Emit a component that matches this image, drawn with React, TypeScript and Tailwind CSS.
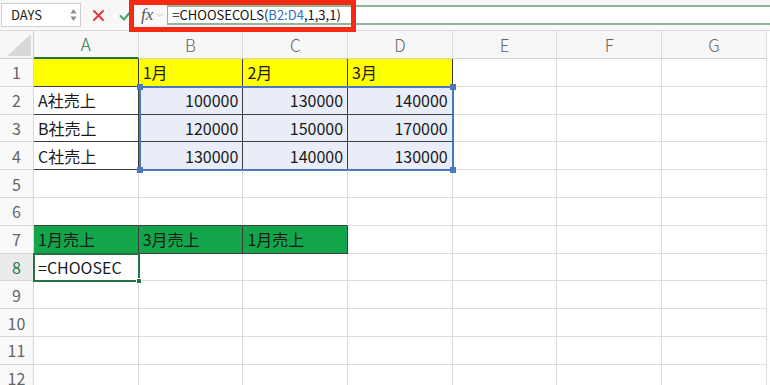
import React from "react";

const cols = ["A", "B", "C", "D", "E", "F", "G"];

type Cell = { text?: string; align?: "left" | "right"; bg?: string; dark?: boolean };

const data: Record<number, Record<string, Cell>> = {
  1: {
    A: { bg: "bg-[#ffff00]", dark: true },
    B: { text: "1月", bg: "bg-[#ffff00]", dark: true },
    C: { text: "2月", bg: "bg-[#ffff00]", dark: true },
    D: { text: "3月", bg: "bg-[#ffff00]", dark: true },
  },
  2: {
    A: { text: "A社売上", dark: true },
    B: { text: "100000", align: "right", bg: "bg-[#e8edf8]", dark: true },
    C: { text: "130000", align: "right", bg: "bg-[#e8edf8]", dark: true },
    D: { text: "140000", align: "right", bg: "bg-[#e8edf8]", dark: true },
  },
  3: {
    A: { text: "B社売上", dark: true },
    B: { text: "120000", align: "right", bg: "bg-[#e8edf8]", dark: true },
    C: { text: "150000", align: "right", bg: "bg-[#e8edf8]", dark: true },
    D: { text: "170000", align: "right", bg: "bg-[#e8edf8]", dark: true },
  },
  4: {
    A: { text: "C社売上", dark: true },
    B: { text: "130000", align: "right", bg: "bg-[#e8edf8]", dark: true },
    C: { text: "140000", align: "right", bg: "bg-[#e8edf8]", dark: true },
    D: { text: "130000", align: "right", bg: "bg-[#e8edf8]", dark: true },
  },
  7: {
    A: { text: "1月売上", bg: "bg-[#12a54c]", dark: true },
    B: { text: "3月売上", bg: "bg-[#12a54c]", dark: true },
    C: { text: "1月売上", bg: "bg-[#12a54c]", dark: true },
  },
  8: {
    A: { text: "=CHOOSEC" },
  },
};

function isDark(r: number, c: string) {
  return !!data[r]?.[c]?.dark;
}

function FormulaBar() {
  return (
    <div className="flex h-[30px] items-center bg-[#f8f8f8]">
      <div className="ml-[1px] flex h-[24px] w-[80px] items-center justify-between border border-[#cfcfcf] bg-white pl-[9px] pr-[3px]">
        <span className="text-[13px] text-[#222]">DAYS</span>
        <svg width="7" height="14" viewBox="0 0 7 14">
          <path d="M3.5 1 L6.5 5.5 L0.5 5.5 Z" fill="#8a8a8a" />
          <path d="M3.5 13 L6.5 8.5 L0.5 8.5 Z" fill="#8a8a8a" />
        </svg>
      </div>
      <svg className="ml-[11px]" width="13" height="13" viewBox="0 0 13 13">
        <path d="M2 2 L11 11 M11 2 L2 11" stroke="#e0393b" strokeWidth="2" strokeLinecap="round" />
      </svg>
      <svg className="ml-[14px]" width="13" height="13" viewBox="0 0 13 13">
        <path d="M1.5 7 L5 10.5 L11.5 2.5" stroke="#44a85f" strokeWidth="2" fill="none" strokeLinecap="round" />
      </svg>
      <span className="ml-[9px] font-['Liberation_Serif',serif] text-[17px] italic text-[#555]">fx</span>
      <svg className="ml-[3px]" width="8" height="6" viewBox="0 0 8 6">
        <path d="M1 1.5 L4 4.5 L7 1.5" stroke="#c4c4c4" strokeWidth="1" fill="none" />
      </svg>
      <div className="ml-[3px] flex h-[20px] flex-1 items-center border-y-2 border-l border-[#8db79a] bg-white pl-[4px] text-[13px] text-[#111]">
        =CHOOSECOLS(<span className="text-[#2f6fc9]">B2:D4</span>,1,3,1)
      </div>
    </div>
  );
}

export default function App() {
  const rows = Array.from({ length: 12 }, (_, i) => i + 1);
  return (
    <div className="relative h-[385px] w-[770px] overflow-hidden bg-white font-['Noto_Sans_CJK_JP','Noto_Sans',sans-serif]">
      <FormulaBar />
      <div className="relative grid grid-cols-[34px_repeat(7,104.7px)] grid-rows-[28px_repeat(12,27.8px)] border-t border-[#d9d9d9]">
        <div className="relative border-r border-b border-[#d0d0d0] bg-[#f7f7f7]">
          <svg className="absolute right-[2px] bottom-[2px]" width="24" height="22" viewBox="0 0 24 22">
            <path d="M24 0 L24 22 L0 22 Z" fill="#d8d8d8" />
          </svg>
        </div>
        {cols.map((c) => (
          <div
            key={c}
            className={`flex items-center justify-center border-r border-[#dadada] bg-[#f7f7f7] text-[17px] font-light ${
              c === "A" ? "border-b-2 border-b-[#217346] text-[#217346]" : "border-b border-b-[#d0d0d0] text-[#666]"
            }`}
          >
            {c}
          </div>
        ))}
        {rows.map((r) => (
          <React.Fragment key={r}>
            <div
              className={`flex items-center justify-center border-r border-b border-[#d6d6d6] text-[16px] ${
                r === 8 ? "bg-[#ebebeb] text-[#217346]" : "bg-[#f9f9f9] text-[#666]"
              }`}
            >
              {r}
            </div>
            {cols.map((c, ci) => {
              const cell = data[r]?.[c] ?? {};
              const dark = isDark(r, c);
              const rightDark = dark || isDark(r, cols[ci + 1]);
              const bottomDark = dark || isDark(r + 1, c);
              return (
                <div
                  key={c}
                  className={`flex items-center overflow-hidden whitespace-nowrap border-r border-b px-[4px] text-[16px] text-[#1a1a1a] ${
                    cell.bg ?? ""
                  } ${rightDark ? "border-r-[#3c3c3c]" : "border-r-[#dcdcdc]"} ${
                    bottomDark ? "border-b-[#3c3c3c]" : "border-b-[#dcdcdc]"
                  } ${cell.align === "right" ? "justify-end" : "justify-start"}`}
                >
                  {cell.text}
                </div>
              );
            })}
          </React.Fragment>
        ))}

        {/* selection range B2:D4 */}
        <div className="pointer-events-none absolute left-[138.7px] top-[54.8px] h-[85.4px] w-[315px] border-2 border-[#4a78c2]">
          <span className="absolute -left-[4px] -top-[4px] h-[6px] w-[6px] bg-[#4a78c2]" />
          <span className="absolute -right-[4px] -top-[4px] h-[6px] w-[6px] bg-[#4a78c2]" />
          <span className="absolute -left-[4px] -bottom-[4px] h-[6px] w-[6px] bg-[#4a78c2]" />
          <span className="absolute -right-[4px] -bottom-[4px] h-[6px] w-[6px] bg-[#4a78c2]" />
        </div>

        {/* active cell A8 */}
        <div className="pointer-events-none absolute left-[33px] top-[221.6px] h-[29.8px] w-[106.7px] border-2 border-[#217346]">
          <span className="absolute -right-[4px] -bottom-[4px] h-[6px] w-[6px] border border-white bg-[#217346]" />
        </div>
      </div>

      {/* annotation box */}
      <div className="pointer-events-none absolute left-[129px] top-0 h-[32px] w-[227px] border-[5px] border-[#f62a12]" />
    </div>
  );
}
